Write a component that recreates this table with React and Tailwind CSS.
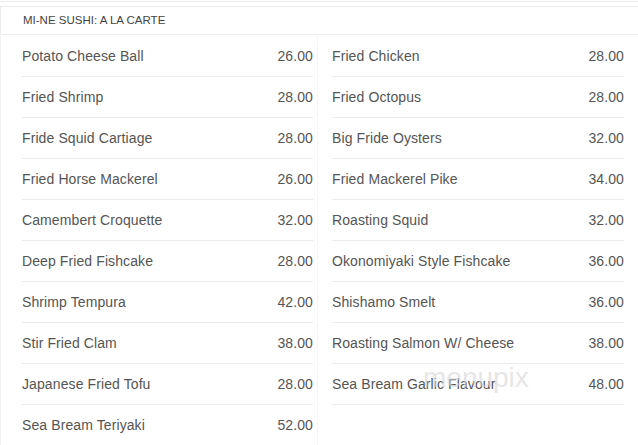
const left = [
  ["Potato Cheese Ball", "26.00"],
  ["Fried Shrimp", "28.00"],
  ["Fride Squid Cartiage", "28.00"],
  ["Fried Horse Mackerel", "26.00"],
  ["Camembert Croquette", "32.00"],
  ["Deep Fried Fishcake", "28.00"],
  ["Shrimp Tempura", "42.00"],
  ["Stir Fried Clam", "38.00"],
  ["Japanese Fried Tofu", "28.00"],
  ["Sea Bream Teriyaki", "52.00"],
];

const right = [
  ["Fried Chicken", "28.00"],
  ["Fried Octopus", "28.00"],
  ["Big Fride Oysters", "32.00"],
  ["Fried Mackerel Pike", "34.00"],
  ["Roasting Squid", "32.00"],
  ["Okonomiyaki Style Fishcake", "36.00"],
  ["Shishamo Smelt", "36.00"],
  ["Roasting Salmon W/ Cheese", "38.00"],
  ["Sea Bream Garlic Flavour", "48.00"],
];

function Row({ name, price }) {
  return (
    <div className="h-[41px] flex items-center justify-between border-b border-[#ebebeb]">
      <span>{name}</span>
      <span>{price}</span>
    </div>
  );
}

export default function App() {
  return (
    <div
      className="relative w-[638px] h-[445px] overflow-hidden bg-white text-[#555] pt-px"
      style={{ fontFamily: '"Liberation Sans", Arial, sans-serif' }}
    >
      <div className="h-px bg-[#ececec]" />
      <div className="mt-1 h-[29px] flex items-center pl-[22px] border-t border-b border-l border-[#ececec] text-[11.5px] text-[#444]">
        MI-NE SUSHI: A LA CARTE
      </div>
      <div className="mt-px flex text-[14px] tracking-[0.1px] border-l border-[#f0f0f0]">
        <div className="w-[317px] pl-[21px] pr-[4px] border-r border-[#f5f5f5]">
          {left.map(([n, p]) => (
            <Row key={n} name={n} price={p} />
          ))}
        </div>
        <div className="w-[306px] pl-[14px]">
          {right.map(([n, p]) => (
            <Row key={n} name={n} price={p} />
          ))}
        </div>
      </div>

      {/* watermark */}
      <div className="absolute left-[423px] top-[357px] text-[28px] text-[#d6d6d6] opacity-60 pointer-events-none">
        menupix
      </div>
    </div>
  );
}
